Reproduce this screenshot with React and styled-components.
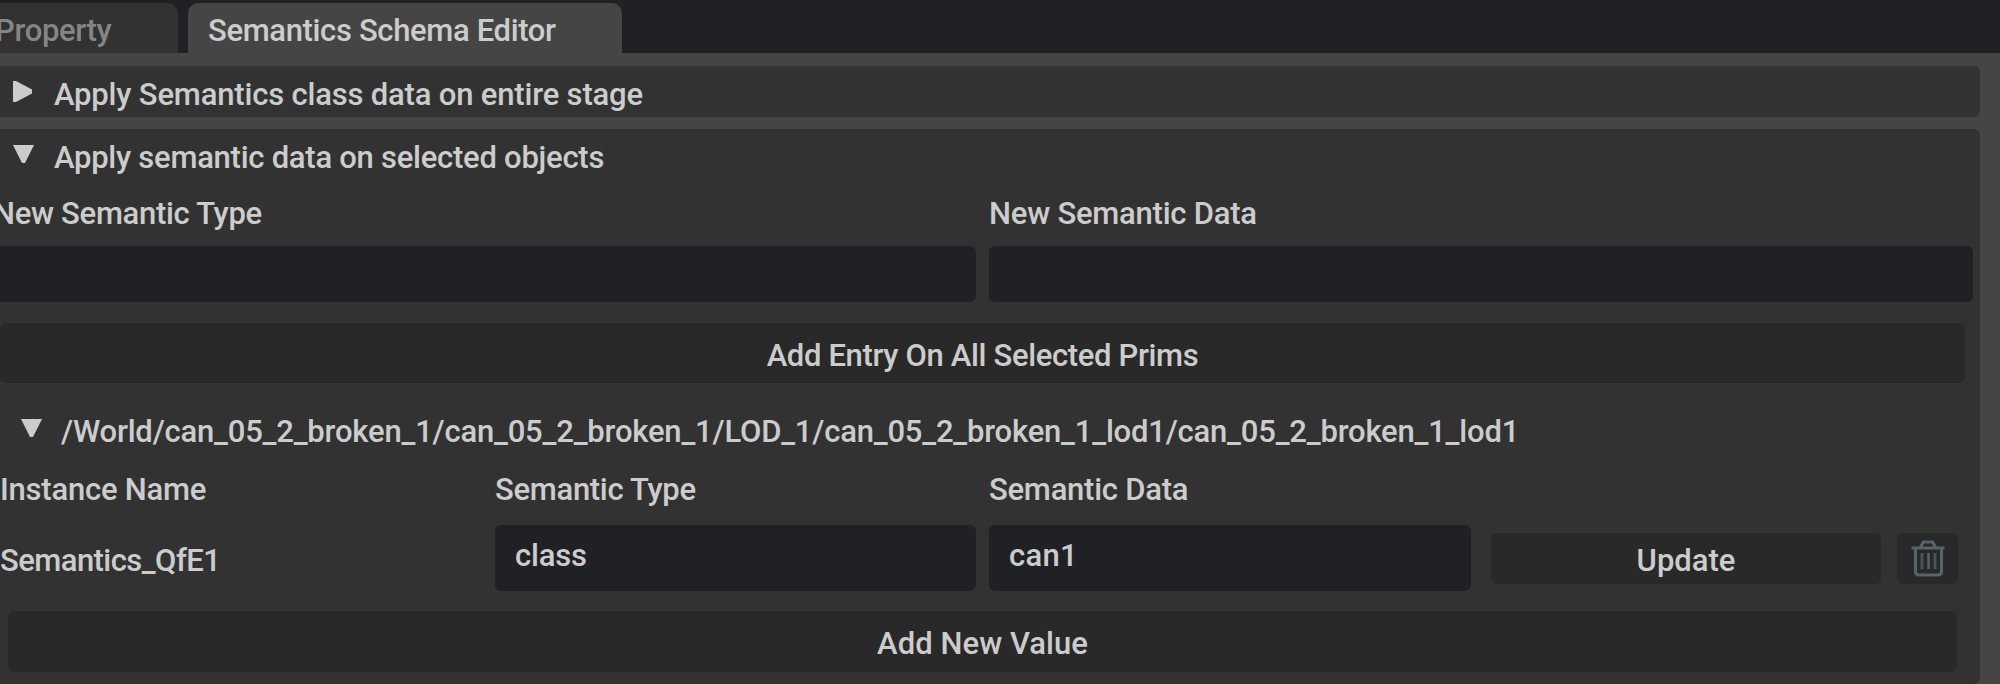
import React from 'react';
import styled, { createGlobalStyle } from 'styled-components';

const Global = createGlobalStyle`
  * { box-sizing: border-box; }
  body { margin: 0; background: #454545; overflow: hidden; }
`;
const Window = styled.main`
  width: 2000px; height: 684px; overflow: hidden;
  display: flex; flex-direction: column;
  background: #454545; color: #cccccc;
  font: 500 31px/36px Roboto, sans-serif;
`;
const TabBar = styled.nav`
  height: 53px; padding-top: 3px; display: flex; gap: 10px; background: #202125;
`;
const Tab = styled.div`
  width: ${p => p.$width}px; height: 50px; padding: 10px 0 0 ${p => p.$pad}px;
  border-radius: ${p => (p.$active ? '10px 10px 0 0' : '0 10px 0 0')};
  background: ${p => (p.$active ? '#454545' : '#323232')};
  color: ${p => (p.$active ? '#cccccc' : '#858585')};
`;
const Text = styled.span`
  display: block; white-space: nowrap; letter-spacing: ${p => p.$ls || 0}px;
  margin-left: ${p => p.$shift || 0}px;
`;
const Stack = styled.div`
  flex: 1; padding-top: 13px; display: flex; flex-direction: column; gap: 12px;
`;
const Panel = styled.section`
  width: 1980px; background: #323232; border-radius: 0 6px 6px 0;
  height: ${p => p.$height}px; overflow: hidden;
`;
const Header = styled.div`
  display: flex; align-items: flex-start; height: ${p => p.$height}px;
  padding: ${p => p.$top}px 0 0 ${p => p.$left}px;
`;
const Arrow = styled.svg`
  display: block; width: 21px; height: 22px; margin: ${p => p.$top}px ${p => p.$gap}px 0 0; fill: #cccccc;
`;
const Labels = styled.div`
  display: grid; grid-template-columns: ${p => p.$cols}; height: ${p => p.$height}px;
  padding-top: ${p => p.$top}px;
`;
const Fields = styled.div`
  display: grid; grid-template-columns: 976px 984px; gap: 13px; height: 56px;
`;
const Field = styled.div`
  background: #202125; border-radius: ${p => (p.$flush ? '0 6px 6px 0' : '6px')};
  padding: 13px 0 0 20px;
`;
const Button = styled.div`
  display: flex; justify-content: center; align-items: center;
  width: ${p => p.$width}px; height: ${p => p.$height}px; margin: ${p => p.$margin || 0};
  padding-top: ${p => p.$top ?? 5}px;
  background: #292929; border-radius: 6px;
`;
const Entry = styled.div`
  display: grid; height: 66px; align-items: center;
  grid-template-columns: 495px 481px 13px 482px 20px 390px 16px 61px;
`;
const EntryName = styled.div` padding-top: 5px; `;
const EntryField = styled(Field)` height: 66px; `;
const Gap = styled.i``;
const Trash = styled.svg` width: 34px; height: 38px; display: block; fill: none; stroke: #576569; `;

const Down = p => <Arrow viewBox="0 0 21 22" {...p}><path d="M0 1H21L12 19H9Z" /></Arrow>;
const Right = p => <Arrow viewBox="0 0 21 22" {...p}><path d="M0 0H3L19 8.5V12.5L3 21H0Z" /></Arrow>;

export default function App() {
  return (
    <Window>
      <Global />
      <TabBar>
        <Tab $width={178} $pad={0}><Text $shift={-5} $ls={-0.35}>Property</Text></Tab>
        <Tab $width={434} $pad={20} $active><Text $ls={-0.35}>Semantics Schema Editor</Text></Tab>
      </TabBar>
      <Stack>
        <Panel $height={51}>
          <Header $height={51} $top={11} $left={13}>
            <Right $top={4} $gap={20} />
            <Text $ls={-0.18}>Apply Semantics class data on entire stage</Text>
          </Header>
        </Panel>
        <Panel $height={555}>
          <Header $height={55} $top={11} $left={13}>
            <Down $top={4} $gap={20} />
            <Text $ls={-0.26}>Apply semantic data on selected objects</Text>
          </Header>
          <Labels $cols="989px 1fr" $height={62} $top={12}>
            <Text $shift={-7} $ls={-0.3}>New Semantic Type</Text>
            <Text $ls={-0.23}>New Semantic Data</Text>
          </Labels>
          <Fields><Field $flush /><Field /></Fields>
          <Button $width={1965} $height={60} $margin="21px 0 0">
            <Text $ls={-0.35}>Add Entry On All Selected Prims</Text>
          </Button>
          <Header $height={78} $top={31} $left={21}>
            <Down $top={4} $gap={19} />
            <Text $ls={-0.2}>/World/can_05_2_broken_1/can_05_2_broken_1/LOD_1/can_05_2_broken_1_lod1/can_05_2_broken_1_lod1</Text>
          </Header>
          <Labels $cols="495px 494px 1fr" $height={64} $top={11}>
            <Text $ls={-0.22}>Instance Name</Text>
            <Text $ls={-0.3}>Semantic Type</Text>
            <Text $ls={-0.25}>Semantic Data</Text>
          </Labels>
          <Entry>
            <EntryName><Text $ls={-0.55}>Semantics_QfE1</Text></EntryName>
            <EntryField><Text $ls={-0.2}>class</Text></EntryField>
            <Gap />
            <EntryField><Text $ls={0.3}>can1</Text></EntryField>
            <Gap />
            <Button $height={51}><Text>Update</Text></Button>
            <Gap />
            <Button $height={51} $top={1}>
              <Trash viewBox="0 0 34 38">
                <path d="M0.5 8H33.5" strokeWidth="3" />
                <path d="M9.5 7L12.5 2H21.5L24.5 7" strokeWidth="3" />
                <path d="M4.5 9V31.5Q4.5 35 8 35H27Q30.5 35 30.5 31.5V9" strokeWidth="3" />
                <path d="M11 13V29M24 13V29" strokeWidth="3" strokeOpacity="0.7" />
                <path d="M17.5 13V29" strokeWidth="2.5" />
              </Trash>
            </Button>
          </Entry>
          <Button $width={1949} $height={61} $margin="20px 0 0 8px"><Text $ls={0.05}>Add New Value</Text></Button>
        </Panel>
      </Stack>
    </Window>
  );
}
